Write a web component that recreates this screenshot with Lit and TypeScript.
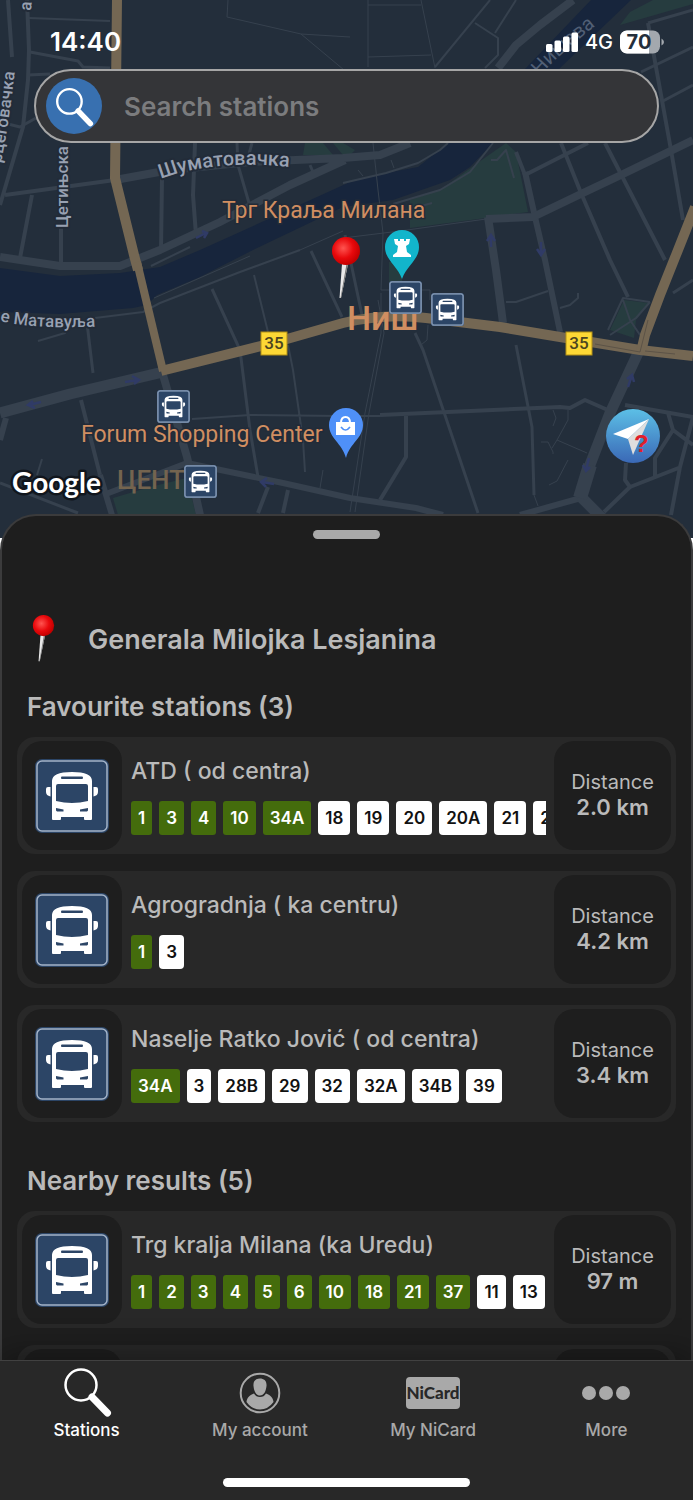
import { LitElement, html, svg, css } from "lit";
import { customElement, property, state } from "lit/decorators.js";
import { classMap } from "lit/directives/class-map.js";

const busShapes = svg`
  <rect width="74" height="74" rx="7" fill="#2c4566"/>
  <rect x="2" y="2" width="70" height="70" rx="5" fill="none" stroke="#a3b3c8" stroke-width="1.5"/>
  <path fill="#fff" fill-rule="evenodd" d="M17 60V22Q17 13 37 13T57 22V60Q57 61 56 61H50Q49 61 49 60V58H26V60Q26 61 25 61H18Q17 61 17 60ZM21 27V42Q37 46 53 42V27Q53 25 51 25H23Q21 25 21 27ZM27 17.5Q26 17.5 26 18.8T27 20H47Q48 20 48 18.8T47 17.5ZM21 49V51.5L22 52.5H28.5V50.5ZM53 49V51.5L52 52.5H45V50.5Z"/>
  <path fill="#fff" d="M15.500 28H13Q11 28 11 30V33Q11 36.500 15.500 37.500ZM58.500 28H61Q63 28 63 30V33Q63 36.500 58.500 37.500Z"/>`;

const busIcon = html`<svg class="bus" viewBox="0 0 74 74" aria-hidden="true">${busShapes}</svg>`;

const busMarker = (x: number, y: number) => svg`
  <svg x=${x} y=${y} width="33" height="33" viewBox="0 0 74 74">${busShapes}
    <rect x="2" y="2" width="70" height="70" rx="5" fill="none" stroke="#7d93b0" stroke-width="3"/>
  </svg>`;

const pinShapes = (id: string) => svg`
  <defs>
    <radialGradient id=${id} cx=".4" cy=".4" r=".6">
      <stop offset="0" stop-color="#ff5450"/><stop offset=".6" stop-color="#e8090c"/><stop offset="1" stop-color="#c40000"/>
    </radialGradient>
  </defs>
  <path d="M11 27H17L10 61H8.500Z" fill="#e9e9e9"/>
  <path d="M15.500 27H17L10 61H9.500Z" fill="#777"/>
  <circle cx="15" cy="14" r="14" fill="url(#${id})"/>`;

const lens = (ring: number) => svg`
  <circle cx="17" cy="17" r="15.5" fill="none" stroke="#fff" stroke-width=${ring}/>
  <path d="M28 29L43.500 45" stroke="#fff" stroke-width="7" stroke-linecap="round"/>
  <path d="M26.500 27.500L30 31" stroke="#fff" stroke-width="5"/>`;

const streets: [number, string][] = [
  [1, "M368 0V67M368 5H421M421 0L435 68M368 57L431 55M381 293V333L365 413L350 512M378 300L384 333L369 413L355 512M343 238L400 231L486 219M373 143L378 190L383 233L381 290H430V300M228 0L227 17L301 34L350 37M301 34L350 75M428 325L427 340L421 345M553 410L556 418L553 426M568 410V420L557 440L552 448M541 442H548L553 452V454M557 440L587 453M568 460L557 481L549 485M323 470L320 488M534 495L538 506M300 250L343 231M154 298L250 256M358 170L363 176M391 160L394 168"],
  [2, "M29 18L110 21M490 0L435 67M516 0L495 33M475 23L498 38V55L485 68M393 204L440 190L470 172L493 143M343 183L386 173L418 163L440 150L448 143M95 318L143 312L160 303L240 272L300 250M38 341L65 333L66 326M42 459L37 475M192 419L250 415L340 416M254 275L268 332M288 345L293 370L303 440L305 472M560 308L570 305L578 298V293M506 302H516L548 291M608 330L623 298L650 302M610 335L636 318L650 302M623 300L630 320L640 335M491 160H497L506 150L514 178M400 212L432 203M151 266L190 247M360 416H380"],
  [3, "M30 52L78 61L83 67L110 68M28 75L50 74M0 122L20 127L36 118M237 143L238 165L249 203M252 143L248 158M87 323L93 373M0 483L78 513M212 289L240 350L250 430L258 477M311 251L342 317M345 235L362 315M516 345L532 427L534 495M415 333L423 350L478 513M648 23L693 10M641 72L693 47M663 101L693 85M673 293L693 280M310 165L313 172"],
  [4, "M8 0L12 57M27 0L29 50L28 80L23 127L0 205M5 195L115 180M32 195L20 258M61 225V265M162 178L161 250M195 143L193 195L196 235M81 400L100 475M268 487L258 513M288 490L283 513M380 415L560 407L570 408L585 400L610 411M406 413V457L380 500M561 143L581 193L610 260L628 297M605 143L665 260M525 175L588 143M648 23L671 150L683 220M625 405L693 417M668 413L673 430L655 458V477M673 430L693 445M681 467L630 487L604 512M626 463L625 480L630 487M693 417L680 467L671 515M516 152L525 175"],
  [6, "M525 172L535 217L545 260L560 332M100 475L112 515M106 494L187 463L283 483L350 498L416 508L443 515M0 440L6 418M520 515L581 498"],
  [8, "M115 180L170 170L250 162L343 158L380 155L410 143M0 257L60 266L120 266L160 250L220 222L290 185L345 160M573 0L540 25L516 45L498 68M488 217L496 270L503 323M486 219L533 217L583 193L621 175L693 140M163 375L187 457L200 515"],
  [11, "M0 413L70 394L163 372M638 353L610 413L588 470M580 496L604 520"],
  [14, "M590 465L580 498"],
];

@customElement("city-map")
export class CityMap extends LitElement {
  static styles = css`
    :host { display: block; height: 100%; }
    .canvas { display: block; width: 100%; height: 100%; }
    .street { font: 500 17px Roboto, "Noto Sans", sans-serif; fill: #98a1b2; stroke: #222b38; stroke-width: 4px; paint-order: stroke; stroke-linejoin: round; }
    .street.big { font-size: 20px; }
    .water { font: 400 20px Roboto, "Noto Sans", sans-serif; fill: #515f75; }
    .poi { font: 400 23px Roboto, "Noto Sans", sans-serif; fill: #d08e61; stroke: #222b38; stroke-width: 3px; paint-order: stroke; }
    .city { font: 500 34px Roboto, "Noto Sans", sans-serif; fill: #d08e61; }
    .district { font: 500 26px Roboto, "Noto Sans", sans-serif; fill: #74644f; }
    .shield { font: 500 17px Roboto, "Noto Sans", sans-serif; fill: #4c4520; text-anchor: middle; }
    .brand { font: 700 28px Lato, "Open Sans", sans-serif; fill: #fff; stroke: #11161d; stroke-width: 5px; paint-order: stroke; stroke-linejoin: round; }
  `;

  render() {
    return html`
      <svg class="canvas" viewBox="0 0 693 538" preserveAspectRatio="xMidYMin slice" role="img" aria-label="Map of Niš">
        <rect width="693" height="538" fill="#232e3b"/>
        <g fill="#263c3f">
          <path d="M620 25L630 12L653 0H693V4Z"/>
          <path d="M410 200L440 190L486 157L506 143L516 152L528 212L486 218L410 228Z"/>
          <path d="M305 143L303 155H333L323 143ZM333 143L343 155H350L355 150L343 143Z"/>
          <path d="M113 498L150 487L187 478L196 515H118Z"/>
          <path d="M610 330L624 300L649 303L636 320L634 338Z"/>
          <path d="M389 262H402V285H389Z"/>
        </g>
        <path fill="#17253c" d="M591 0H631L560 68L520 120L493 143L470 167L450 180L393 200L343 207L253 250L200 277L157 295L147 305L133 308L60 314L0 312V268L60 276L120 273L160 267L200 250L317 197L350 182L386 173L418 167L448 143L526 68Z"/>
        <g fill="none" stroke="#36414e" stroke-linejoin="round">
          ${streets.map(([w, d]) => svg`<path stroke-width=${w} d=${d}/>`)}
        </g>
        <g fill="none" stroke="#746753" stroke-width="10" stroke-linejoin="miter">
          <path d="M117 0L115 178L134 255L138 270"/>
          <path stroke-width="8" d="M137 262L163 371"/>
          <path d="M161 371L273 343L343 323Q385 313 426 318L500 327L560 337L640 350L693 356"/>
          <path d="M641 352L645 335L660 295L676 255L695 207"/>
        </g>
        <path d="M595 344L640 352L648 320M645 351L675 354" fill="none" stroke="#5c5347"/>
        <g fill="none" stroke="#303b66" stroke-width="2.5">
          <path d="M196 238L206 233M202 231L207 233L204 238"/>
          <path d="M41 402L29 405M33 401L28 405L35 408M125 382L138 380M132 376L139 380L134 384"/>
          <path d="M491 247V235M487 241L491 235L495 241M541 242V254M537 249L541 255L545 249"/>
          <path d="M628 387L632 375M627 379L632 375L634 382M589 458L586 470M583 465L586 471L590 467"/>
          <path d="M274 484L262 482M267 478L261 482L266 487"/>
        </g>
        <defs>
          <path id="st-a" d="M161 179Q215 158 300 168"/>
          <path id="st-b" d="M1 163Q11 115 18 40"/>
          <path id="st-c" d="M0 321Q40 331 120 325"/>
          <path id="st-d" d="M540 76Q566 46 625 4"/>
        </defs>
        <text class="water"><textPath href="#st-d">Нишава</textPath></text>
        <text class="street big"><textPath href="#st-a">Шуматовачка</textPath></text>
        <text class="street"><textPath href="#st-b">рцеговачка</textPath></text>
        <text class="street"><textPath href="#st-c">е Матавуља</textPath></text>
        <text class="street" transform="translate(68 228) rotate(-90)">Цетињска</text>
        <text class="street" transform="translate(31 11) rotate(-85)">а</text>
        <text class="poi" x="222" y="218">Трг Краља Милана</text>
        <text class="poi" x="81" y="442">Forum Shopping Center</text>
        <text class="district" x="117" y="489">ЦЕНТАР</text>
        <text class="city" x="347" y="330">Ниш</text>
        <g>
          <rect x="261" y="332" width="26" height="23" fill="#fdd835" stroke="#b28f16"/>
          <text class="shield" x="274" y="349">35</text>
          <rect x="566" y="332" width="26" height="23" fill="#fdd835" stroke="#b28f16"/>
          <text class="shield" x="579" y="349">35</text>
        </g>
        <path fill="#12b5cb" d="M385 247A17 17 0 0 1 419 247C419 260 407 265 402 279C397 265 385 260 385 247Z"/>
        <path fill="#fff" d="M394 239H398V241H400V239H404V241H406V239H410L409 244L406 246L407 252L411 255V257H393V255L397 252L398 246L395 244Z"/>
        <path fill="#4f90f8" d="M329 425A17 17 0 0 1 363 425C363 438 350 443 346 458C342 443 329 438 329 425Z"/>
        <path fill="#fff" d="M336 422H355V435H336Z"/>
        <path fill="none" stroke="#fff" stroke-width="2" d="M341 423Q341 417 345.500 417T350 423"/>
        <path fill="none" stroke="#4f90f8" stroke-width="1.600" d="M341 427Q345.500 433 350 427"/>
        ${busMarker(157, 390)} ${busMarker(184, 465)} ${busMarker(389, 281)} ${busMarker(431, 293)}
        <svg x="331" y="237" width="30" height="62" viewBox="0 0 30 62">${pinShapes("map-pin")}</svg>
        <text class="brand" x="12" y="493">Google</text>
      </svg>
    `;
  }
}

interface Station {
  name: string;
  distance: string;
  active: string[];
  other: string[];
}

@customElement("station-card")
export class StationCard extends LitElement {
  @property({ attribute: false }) station!: Station;

  static styles = css`
    :host { display: block; }
    .card { display: grid; grid-template-columns: 100px minmax(0, 1fr) 117px; column-gap: 9px; height: 109px; padding: 4px 5px; border-radius: 18px; background: #282828; }
    .tile { display: flex; flex-direction: column; align-items: center; justify-content: center; border-radius: 20px; background: #1e1e1e; }
    .tile.info { padding-bottom: 2px; }
    .bus { width: 74px; height: 74px; }
    .body { display: flex; flex-direction: column; gap: 16px; padding-top: 16px; margin-right: -1px; min-width: 0; }
    .name { margin: 0; font-size: 23px; line-height: 28px; font-weight: 500; white-space: nowrap; }
    .lines { display: flex; gap: 7px; margin: 0; padding: 0; overflow: hidden; list-style: none; }
    .line { flex: none; padding: 0 7px; border-radius: 4px; background: #fff; color: #111; font-size: 17px; line-height: 34px; font-weight: 600; }
    .line.active { background: #446c0c; color: #fff; border-radius: 3px; }
    .label { font-size: 20px; line-height: 24px; }
    .value { font-size: 22px; line-height: 26px; font-weight: 600; }
  `;

  render() {
    const s = this.station;
    return html`
      <article class="card">
        <div class="tile">${busIcon}</div>
        <div class="body">
          <h3 class="name">${s.name}</h3>
          <ul class="lines">
            ${s.active.map((l) => html`<li class="line active">${l}</li>`)}
            ${s.other.map((l) => html`<li class="line">${l}</li>`)}
          </ul>
        </div>
        <div class="tile info">
          <span class="label">Distance</span>
          <span class="value">${s.distance}</span>
        </div>
      </article>
    `;
  }
}

const favourites: Station[] = [
  { name: "ATD ( od centra)", distance: "2.0 km", active: ["1", "3", "4", "10", "34A"], other: ["18", "19", "20", "20A", "21", "22"] },
  { name: "Agrogradnja ( ka centru)", distance: "4.2 km", active: ["1"], other: ["3"] },
  { name: "Naselje Ratko Jović ( od centra)", distance: "3.4 km", active: ["34A"], other: ["3", "28B", "29", "32", "32A", "34B", "39"] },
];

const nearby: Station[] = [
  { name: "Trg kralja Milana (ka Uredu)", distance: "97 m", active: ["1", "2", "3", "4", "5", "6", "10", "18", "21", "37"], other: ["11", "13"] },
  { name: "", distance: "", active: [], other: [] },
];

const tabs = [
  { id: "stations", label: "Stations", icon: html`<svg class="glyph" viewBox="0 0 50 50">${svg`<g transform="translate(2 0)">${lens(2.5)}</g>`}</svg>` },
  {
    id: "account",
    label: "My account",
    icon: html`<svg class="glyph" viewBox="0 0 50 50">
      <circle cx="25" cy="25" r="19.300" fill="none" stroke="#a9a9a9" stroke-width="2"/>
      <path fill="#a9a9a9" d="M25 10.500C29 10.500 32 13 31.500 18C31 23 29 27.500 25 27.500S19 23 18.500 18C18 13 21 10.500 25 10.500ZM19 25.500Q21 29 25 29T31 25.500C36 27.500 38 30 38.500 34Q33 41.500 25 41.500T11.500 34C12 30 14 27.500 19 25.500Z"/>
    </svg>`,
  },
  {
    id: "nicard",
    label: "My NiCard",
    icon: html`<svg class="glyph wide" viewBox="0 0 54 50">
      <rect y="9" width="54" height="32" rx="4" fill="#a9a9a9"/>
      <text class="card-text" x="27" y="31">NiCard</text>
    </svg>`,
  },
  {
    id: "more",
    label: "More",
    icon: html`<svg class="glyph" viewBox="0 0 50 50"><g fill="#a9a9a9"><circle cx="8" cy="25" r="7"/><circle cx="25" cy="25" r="7"/><circle cx="42" cy="25" r="7"/></g></svg>`,
  },
];

@customElement("app-root")
export class AppRoot extends LitElement {
  @state() private tab = "stations";

  static styles = css`
    :host { display: flex; flex-direction: column; height: 100vh; background: #fff; color: #bababa; font-family: Inter, "Liberation Sans", sans-serif; }
    button { border: 0; padding: 0; background: none; color: inherit; font: inherit; cursor: pointer; }
    .top { position: relative; flex: none; display: grid; grid-template: 538px / minmax(0, 1fr); background: #232e3b; }
    .map, .chrome { grid-area: 1 / 1; }
    .chrome { position: relative; align-self: start; }
    .status { display: flex; align-items: center; justify-content: space-between; height: 41px; padding: 21px 29px 7px 50px; color: #fff; }
    .clock { font-size: 26px; line-height: 32px; font-weight: 600; }
    .indicators { display: flex; align-items: center; gap: 7px; font-size: 20px; font-weight: 500; }
    .signal { width: 32px; height: 20px; }
    .battery { width: 44px; height: 24px; }
    .battery-text { font: 700 20px Inter, sans-serif; fill: #232e3b; text-anchor: middle; }
    .search { display: flex; align-items: center; gap: 22px; box-sizing: border-box; height: 74px; margin: 0 34px; padding: 0 10px; border: 2px solid #a6a6a6; border-radius: 37px; background: #343538; }
    .search-icon { flex: none; width: 56px; height: 56px; }
    .query { flex: 1; min-width: 0; border: 0; padding: 0; outline: 0; background: none; color: #fff; font: 600 26px Inter, "Liberation Sans", sans-serif; }
    .query::placeholder { color: #7b7c7e; opacity: 1; }
    .locate { position: absolute; right: 33px; bottom: 75px; width: 54px; height: 54px; }
    .locate-icon { display: block; width: 54px; height: 54px; }
    .mark { font: 700 24px "Liberation Sans", sans-serif; fill: #e01f2b; }
    .sheet { position: relative; flex: 1; min-height: 0; display: flex; flex-direction: column; margin-top: -24px; overflow: hidden; border: 2px solid #3b3b3c; border-bottom: 0; border-radius: 36px 36px 0 0; background: #1e1e1e; }
    .handle { flex: none; align-self: center; width: 67px; height: 9px; margin-top: 14px; border-radius: 5px; background: #a9a9a9; }
    .place { flex: none; display: flex; align-items: flex-end; gap: 33px; margin: 76px 30px 0; }
    .pin { flex: none; width: 23px; height: 47px; }
    .place-name { margin: 0; font-size: 27px; line-height: 44px; font-weight: 600; }
    .group { flex: none; display: flex; flex-direction: column; gap: 17px; padding: 0 15px; margin-top: 28px; }
    .group.next { margin-top: 42px; }
    .group-title { margin: 0 10px -4px; font-size: 26px; line-height: 34px; font-weight: 600; }
    .tabs { position: relative; flex: none; display: flex; flex-direction: column; align-items: center; height: 139px; border-top: 1px solid #414141; background: #282828; box-shadow: 0 -6px 30px rgba(0, 0, 0, 0.35); }
    .tab-row { align-self: stretch; display: grid; grid-template-columns: repeat(4, minmax(0, 1fr)); }
    .tab { display: flex; flex-direction: column; align-items: center; padding-top: 7px; font-size: 17px; line-height: 24px; font-weight: 500; color: #a9a9a9; }
    .tab.current { color: #fff; }
    .glyph { width: 50px; height: 50px; }
    .glyph.wide { width: 54px; }
    .card-text { font: 900 17px Lato, sans-serif; fill: #282828; text-anchor: middle; }
    .home { width: 247px; height: 9px; margin-top: auto; margin-bottom: 13px; border-radius: 5px; background: #fff; }
  `;

  private group(title: string, items: Station[], next: boolean) {
    return html`
      <section class=${classMap({ group: true, next })}>
        <h2 class="group-title">${title}</h2>
        ${items.map((s) => html`<station-card .station=${s}></station-card>`)}
      </section>
    `;
  }

  render() {
    return html`
      <header class="top">
        <city-map class="map"></city-map>
        <div class="chrome">
          <div class="status">
            <span class="clock">14:40</span>
            <span class="indicators">
              <svg class="signal" viewBox="0 0 32 20" fill="#fff" aria-hidden="true">
                <rect y="12" width="6.500" height="8" rx="1.500"/><rect x="8.500" y="8.500" width="6.500" height="11.500" rx="1.500"/><rect x="17" y="4.500" width="6.500" height="15.500" rx="1.500"/><rect x="25.500" y="0.500" width="6.500" height="19.500" rx="1.500"/>
              </svg>
              <span>4G</span>
              <svg class="battery" viewBox="0 0 44 24" role="img" aria-label="Battery 70%">
                <rect y="0.500" width="40" height="23" rx="7" fill="#a3a8ae"/>
                <path d="M7 .5H29V23.500H7A7 7 0 0 1 0 16.500V7.500A7 7 0 0 1 7 .5Z" fill="#fff"/>
                <path d="M41.500 8.500Q44 10 44 12T41.500 15.500Z" fill="#a3a8ae"/>
                <text class="battery-text" x="19" y="19">70</text>
              </svg>
            </span>
          </div>
          <label class="search">
            <svg class="search-icon" viewBox="0 0 56 56" aria-hidden="true">
              <circle cx="28" cy="28" r="28" fill="#3870b0"/>
              <g transform="translate(10 10) scale(.79)">${lens(3)}</g>
            </svg>
            <input class="query" type="text" placeholder="Search stations" aria-label="Search stations" />
          </label>
        </div>
        <button class="locate" aria-label="My location">
          <svg class="locate-icon" viewBox="0 0 54 54">
            <defs><linearGradient id="sky" x2="0" y2="1"><stop offset="0" stop-color="#5cbfe6"/><stop offset="1" stop-color="#3a68b6"/></linearGradient></defs>
            <circle cx="27" cy="27" r="27" fill="url(#sky)"/>
            <path d="M7 25L43 10L22 30Z" fill="#fff"/>
            <path d="M43 10L27 46L22 30Z" fill="#dedede"/>
            <text class="mark" x="28" y="43">?</text>
          </svg>
        </button>
      </header>
      <main class="sheet">
        <button class="handle" aria-label="Resize panel"></button>
        <div class="place">
          <svg class="pin" viewBox="0 0 30 62" aria-hidden="true">${pinShapes("place-pin")}</svg>
          <h1 class="place-name">Generala Milojka Lesjanina</h1>
        </div>
        ${this.group("Favourite stations (3)", favourites, false)}
        ${this.group("Nearby results (5)", nearby, true)}
      </main>
      <nav class="tabs">
        <div class="tab-row">
          ${tabs.map((t) => html`
            <button class=${classMap({ tab: true, current: t.id === this.tab })} @click=${() => (this.tab = t.id)}>
              ${t.icon}<span>${t.label}</span>
            </button>`)}
        </div>
        <div class="home"></div>
      </nav>
    `;
  }
}
